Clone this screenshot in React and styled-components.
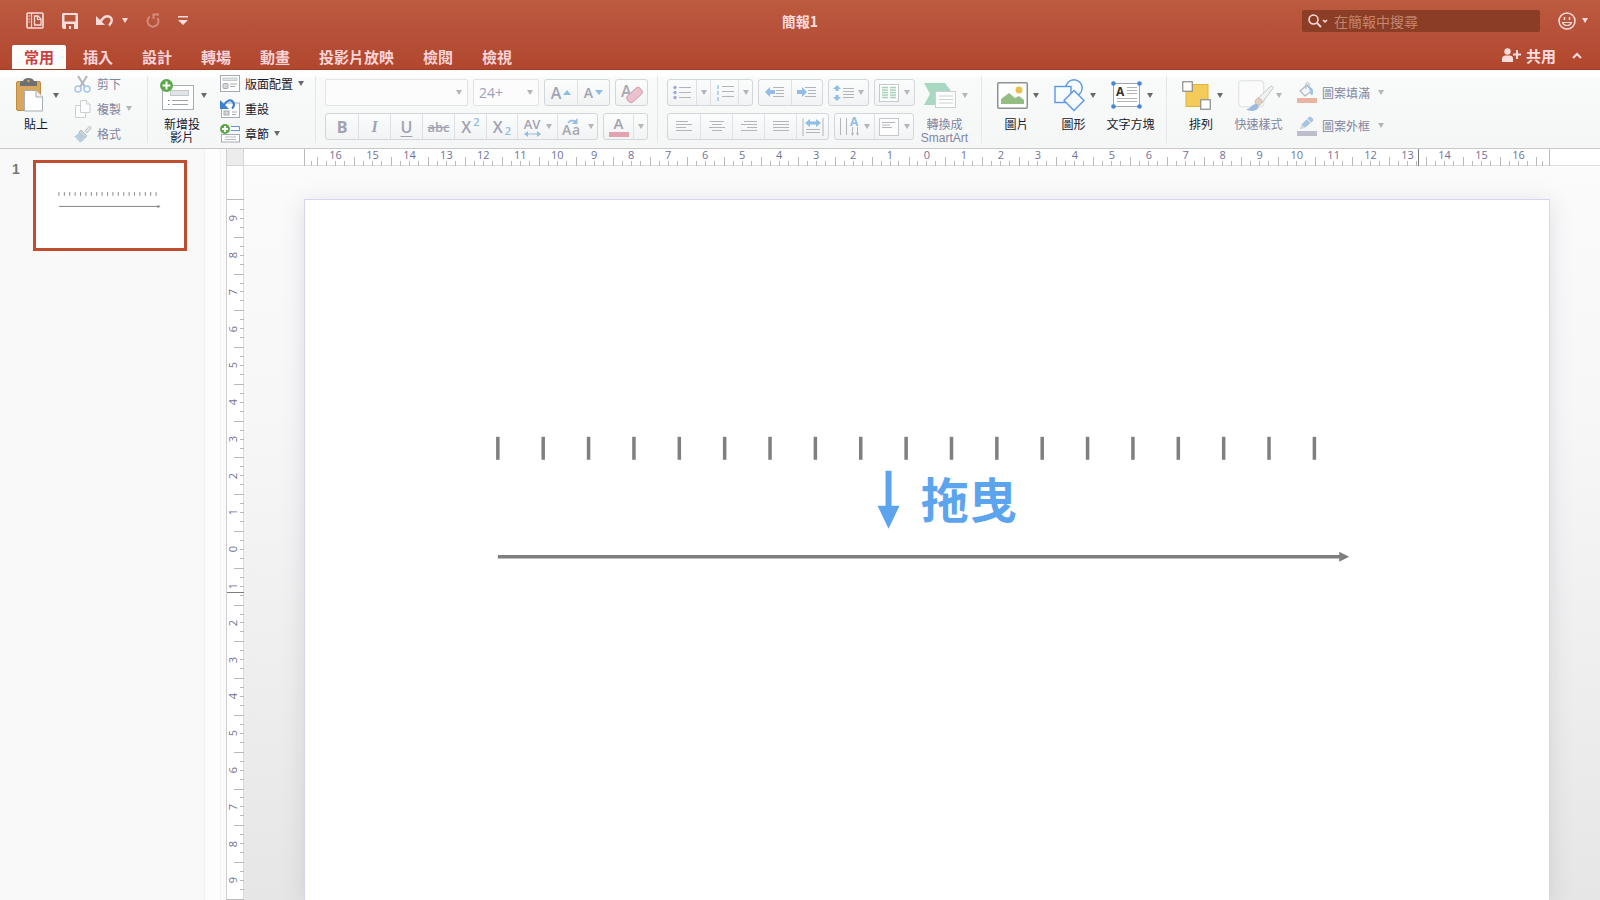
import React from "react";
import styled, { createGlobalStyle, css } from "styled-components";

const cjk = `"Noto Sans CJK TC", sans-serif`;

const GlobalStyle = createGlobalStyle`
  *, *::before, *::after { box-sizing: border-box; }
  body { margin: 0; background: #fafafa; font-family: ${cjk}; }
  button, input, select { font: inherit; color: inherit; }
  button { margin: 0; padding: 0; border: 0; background: none; }
  svg { display: block; flex: none; overflow: visible; }
`;

/* ---------- window frame ---------- */

const Window = styled.div`
  display: flex;
  flex-direction: column;
  min-height: 100vh;
`;

const Header = styled.header`
  display: flex;
  flex-direction: column;
  height: 70px;
  color: #fbdcdc;
  background: linear-gradient(#bc5b3e, #b7513a 45%, #b1472d);
  border-bottom: 1px solid #96402b;
`;

const TitleBar = styled.div`
  display: grid;
  grid-template-columns: 1fr auto 1fr;
  align-items: center;
  height: 43px;
  padding: 0 12px;
`;

const QuickAccess = styled.div`
  display: flex;
  align-items: center;
  gap: 18px;
  padding-left: 14px;
`;

const BarButton = styled.button`
  display: flex;
  align-items: center;
  gap: ${(p) => p.$gap || 6}px;
  opacity: ${(p) => (p.disabled ? 0.4 : 1)};
  color: #fbdcdc;
`;

const DocTitle = styled.h1`
  margin: 0;
  font-size: 14px;
  line-height: 20px;
  font-weight: 600;
`;

const TitleRight = styled.div`
  display: flex;
  justify-content: flex-end;
  align-items: center;
  gap: 18px;
`;

const SearchBox = styled.label`
  display: flex;
  align-items: center;
  gap: 6px;
  width: 238px;
  height: 22px;
  padding: 0 6px;
  border-radius: 2px;
  background: #8b3d25;
`;

const SearchInput = styled.input`
  flex: 1;
  min-width: 0;
  height: 20px;
  padding: 0;
  border: 0;
  outline: 0;
  background: none;
  font-size: 14px;
  &::placeholder { color: #c4846d; opacity: 1; }
`;

const TabBar = styled.div`
  display: flex;
  align-items: flex-end;
  flex: 1;
  padding: 0 18px 0 12px;
`;

const Tabs = styled.nav`
  display: flex;
  gap: 5px;
  flex: 1;
`;

const Tab = styled.button`
  height: 24px;
  padding: 0 12px;
  font-size: 15px;
  line-height: 22px;
  font-weight: 600;
  white-space: nowrap;
  color: #fad4d8;
  ${(p) => p.$active && css`
    color: #cb3f3d;
    background: #fdfdfd;
    border-radius: 2px 2px 0 0;
  `}
`;

const ShareArea = styled.div`
  display: flex;
  align-items: center;
  gap: 16px;
  height: 28px;
`;

const ShareButton = styled(BarButton)`
  gap: 5px;
  font-size: 15px;
  font-weight: 600;
`;

/* ---------- ribbon ---------- */

const Ribbon = styled.div`
  display: flex;
  height: 79px;
  background: linear-gradient(#fefefe 6px, #f9fafa 8px, #f5f6f6);
  border-bottom: 1px solid #c9c9c9;
`;

const Group = styled.section`
  position: relative;
  display: flex;
  gap: ${(p) => p.$gap || 14}px;
  flex: none;
  width: ${(p) => (p.$width ? `${p.$width}px` : "auto")};
  padding-left: ${(p) => p.$pad}px;
  ${(p) => p.$width && css`
    &::after {
      content: "";
      position: absolute;
      right: 0;
      top: 6px;
      bottom: 5px;
      width: 1px;
      background: #e6e7e8;
    }
  `}
`;

const Big = styled.button`
  display: flex;
  flex-direction: column;
  align-items: center;
  flex: none;
  gap: 5px;
  width: ${(p) => p.$width}px;
  padding-top: 6px;
  color: ${(p) => (p.disabled ? "#8186a0" : "#14162e")};
`;

const BigIcon = styled.span`
  display: flex;
  align-items: center;
  justify-content: space-between;
  width: 100%;
  height: 38px;
`;

const BigLabel = styled.span`
  padding-right: 3px;
  font-size: 12px;
  line-height: 13px;
  white-space: pre;
  font-family: "Liberation Sans", ${cjk};
`;

const SmallList = styled.div`
  display: flex;
  flex-direction: column;
  padding-top: ${(p) => (p.$tall ? 6 : 1)}px;
`;

const Small = styled.button`
  display: flex;
  align-items: center;
  gap: 5px;
  height: ${(p) => (p.$tall ? 33 : 25)}px;
  font-size: 12px;
  line-height: 16px;
  white-space: nowrap;
  color: ${(p) => (p.disabled ? "#8186a0" : "#14162e")};
  & > span { margin-right: ${(p) => (p.$tall ? 3 : 0)}px; }
`;

const Rows = styled.div`
  display: flex;
  flex-direction: column;
  gap: 7px;
  padding-top: 9px;
`;

const Row = styled.div`
  display: flex;
  gap: 5px;
  height: 27px;
`;

const Combo = styled.div`
  display: flex;
  align-items: center;
  width: ${(p) => p.$width}px;
  padding: 0 5px;
  border: 1px solid #e2e3e5;
  border-radius: 2px;
  background: #fcfcfc;
`;

const Select = styled.select`
  appearance: none;
  flex: 1;
  min-width: 0;
  height: 22px;
  padding: 0;
  border: 0;
  background: none;
  opacity: 1;
  font-family: "Open Sans", sans-serif;
  font-size: 14px;
  color: #9ea1bd;
`;

const Segments = styled.div`
  display: flex;
  border: 1px solid #d3d6da;
  border-radius: 3px;
  background: linear-gradient(#fbfcfc, #f2f3f4);
`;

const Seg = styled.button`
  display: flex;
  align-items: center;
  justify-content: center;
  gap: ${(p) => p.$gap || 2}px;
  width: ${(p) => p.$width}px;
  font-family: "Open Sans", sans-serif;
  font-size: 16px;
  line-height: 20px;
  color: #a0a3b2;
  & + & { border-left: 1px solid #dfe1e4; }
`;

const Glyph = styled.span`
  font-weight: ${(p) => (p.$bold ? 700 : 600)};
  font-style: ${(p) => (p.$italic ? "italic" : "normal")};
  font-family: ${(p) => (p.$italic ? `"Liberation Serif", serif` : "inherit")};
  font-size: ${(p) => p.$size || 16}px;
  text-decoration: ${(p) => p.$line || "none"};
  text-decoration-thickness: 1px;
  text-underline-offset: 3px;
`;

const Script = styled.span`
  align-self: ${(p) => (p.$low ? "flex-end" : "flex-start")};
  font-size: 11px;
  line-height: 16px;
  font-weight: 600;
  color: #92bde6;
`;

const Stack = styled.span`
  display: flex;
  flex-direction: column;
  align-items: center;
  gap: ${(p) => p.$gap || 0}px;
  font-size: ${(p) => p.$size || 13}px;
  line-height: 14px;
  font-weight: 600;
`;

const ColorBar = styled.span`
  width: 20px;
  height: 5px;
  background: #e2a3ae;
`;

/* ---------- work area ---------- */

const Main = styled.main`
  display: flex;
  flex: 1;
`;

const Slides = styled.aside`
  display: flex;
  align-items: flex-start;
  gap: 13px;
  flex: none;
  width: 205px;
  padding: 11px 0 0 12px;
  background: #f9f9f9;
  border-right: 1px solid #f0f0f1;
`;

const SlideNumber = styled.span`
  width: 8px;
  font-family: "Liberation Sans", sans-serif;
  font-size: 14px;
  line-height: 18px;
  font-weight: 700;
  color: #777;
`;

const Thumb = styled.button`
  width: 154px;
  padding: 1px 0;
  border: 3px solid #c14d31;
  background: #fff;
`;

const Divider = styled.div`
  flex: none;
  width: 22px;
  background: linear-gradient(90deg, #fdfdfd 15px, #f2f2f3 15px, #f2f2f3 16px, #fbfbfb 16px);
  border-right: 1px solid #cfcfcf;
`;

const Workspace = styled.div`
  display: grid;
  flex: 1;
  grid-template-columns: 17px 60px minmax(0, 1fr) 50px;
  grid-template-rows: 17px 33px auto 1fr;
  background: linear-gradient(#fbfbfb, #f7f7f8 35%, #eeeeee 70%, #e6e6e6);
`;

const Corner = styled.div`
  background: #ececec;
  border-right: 1px solid #d5d5d8;
  border-bottom: 1px solid #d5d5d8;
`;

const RulerTrack = styled.div`
  background: #fff;
  grid-row: ${(p) => (p.$vertical ? "2 / 5" : "1")};
  grid-column: ${(p) => (p.$vertical ? "1" : "2 / 5")};
  border: 0 solid #dcdcde;
  ${(p) => (p.$vertical ? "border-right-width: 1px;" : "border-bottom-width: 1px;")}
`;

const HRuler = styled.div`
  grid-row: 1;
  grid-column: 3;
  position: relative;
  display: flex;
  border-left: 1px solid #bbb;
  border-right: 1px solid #bbb;
  font: 11px/12px "Open Sans", sans-serif;
  color: #6f7199;
`;

const VRuler = styled(HRuler)`
  grid-row: 3;
  grid-column: 1;
  flex-direction: column;
  border: 0;
  border-top: 1px solid #bbb;
  border-bottom: 1px solid #bbb;
`;

const HCell = styled.div`
  display: flex;
  flex-direction: column;
  justify-content: space-between;
  align-items: center;
  flex: 1 1 0;
  min-width: 0;
  height: 17px;
`;

const HTicks = styled.div`
  display: flex;
  justify-content: space-between;
  align-items: flex-end;
  align-self: stretch;
  height: 9px;
  margin-top: -6px;
`;

const HTick = styled.i`
  width: 1px;
  height: ${(p) => (p.$long ? 9 : 5)}px;
  background: ${(p) => (p.$blank ? "transparent" : "#b9b9b9")};
`;

const HEnd = styled.div`
  flex: 0 1 12px;
  display: flex;
  align-items: flex-end;
  justify-content: center;
`;

const VCell = styled.div`
  display: flex;
  align-items: center;
  justify-content: space-between;
  flex: 1 1 0;
  min-height: 0;
`;

const VLabel = styled.span`
  writing-mode: vertical-rl;
  transform: rotate(180deg);
  line-height: 12px;
`;

const VTicks = styled.div`
  display: flex;
  flex-direction: column;
  justify-content: space-between;
  align-items: flex-end;
  align-self: stretch;
  width: 10px;
  margin-left: -6px;
`;

const VTick = styled.i`
  height: 1px;
  width: ${(p) => (p.$long ? 10 : 4)}px;
  background: ${(p) => (p.$blank ? "transparent" : "#b9b9b9")};
`;

const PointerMark = styled.i`
  position: absolute;
  background: #7d7d7d;
  ${(p) => (p.$vertical
    ? "top: 56.1%; left: 0; width: 17px; height: 1px;"
    : "left: 89.5%; top: 0; height: 17px; width: 1px;")}
`;

const Slide = styled.div`
  grid-row: 3;
  grid-column: 3;
  position: relative;
  aspect-ratio: 16 / 9;
  background: #fff;
  border: 1px solid #d6d6ec;
  border-bottom: 0;
  box-shadow: 0 4px 22px rgba(80, 80, 120, 0.16);
`;

const Caption = styled.p`
  position: absolute;
  left: 49.5%;
  top: 37.3%;
  margin: 0;
  font-size: 48px;
  line-height: 72px;
  font-weight: 700;
  color: #5ca5ee;
`;

/* ---------- drawings ---------- */

const Caret = ({ color = "#666a70", size = 6 }) => (
  <svg width={size} height="5" viewBox="0 0 6 5" aria-hidden="true">
    <path d="M0 0h6L3 5z" fill={color} />
  </svg>
);
const Dim = () => <Caret color="#b3b5ba" />;

const Timeline = ({ stroke, guide }) => (
  <svg width="100%" viewBox="0 0 1245 700" aria-hidden="true">
    {Array.from({ length: 19 }, (_, i) => (
      <path key={i} d={`M${193 + i * 45.4} 237v${guide ? 23 : 30}`} stroke="#7f7f7f" strokeWidth={stroke} />
    ))}
    <path d="M193 357h847" stroke="#7f7f7f" strokeWidth={stroke} />
    {guide
      ? <path d="M1035 352l10 5-10 5z" fill="#7f7f7f" />
      : <path d="M1022 342l26 15-26 15z" fill="#8f8f8f" />}
    {guide && <path d="M581 271h6v35h8l-11 23-11-23h8z" fill="#5ca5ee" />}
  </svg>
);

const PanelIcon = () => (
  <svg width="18" height="17" viewBox="0 0 18 17" fill="none" stroke="currentColor">
    <rect x="1" y="1" width="16" height="15" rx="1" strokeWidth="1.6" />
    <path d="M5.5 1v15" strokeWidth="1.2" />
    <path d="M2.500 4h1.500M2.500 7h1.500M2.500 10h1.500" strokeWidth="1" />
    <path d="M8.500 4h3.500l3 3v6H8.500z" strokeWidth="1.300" />
    <path d="M11.500 4v3.500H15" strokeWidth="1.200" />
  </svg>
);
const SaveIcon = () => (
  <svg width="16" height="16" viewBox="0 0 16 16">
    <path fillRule="evenodd" fill="currentColor" d="M1 0h14l1 1v15H1.500L0 14.500V1zM2.500 2v6.500h11V2zM4 11V16h3v-3h2v3h3v-5z" />
  </svg>
);
const UndoIcon = () => (
  <svg width="18" height="15" viewBox="0 0 18 15">
    <path d="M0 3v9h9z" fill="currentColor" />
    <path d="M4.500 8.500C7 4.500 10 2.500 13 3.500c3.500 1.300 3.800 5.500 0 9" fill="none" stroke="currentColor" strokeWidth="2.400" />
  </svg>
);
const RedoIcon = () => (
  <svg width="14" height="15" viewBox="0 0 14 15" fill="none" stroke="currentColor" strokeWidth="2">
    <path d="M4 3.500A5.500 5.500 0 1 0 11.500 5" />
    <path d="M7.500 6V1.500H13" />
  </svg>
);
const CustomizeIcon = () => (
  <svg width="10" height="9" viewBox="0 0 10 9" fill="currentColor">
    <path d="M0 0h10v1.500H0zM0 4h10L5 9z" />
  </svg>
);
const SearchIcon = () => (
  <svg width="20" height="14" viewBox="0 0 20 14" fill="none" stroke="#fbdcdc">
    <circle cx="5.500" cy="5.500" r="4.500" strokeWidth="1.500" />
    <path d="M9 9l4 4" strokeWidth="1.800" />
    <path d="M15 6l2 2 2-2" strokeWidth="1.500" />
  </svg>
);
const SmileIcon = () => (
  <svg width="18" height="18" viewBox="0 0 18 18" fill="none" stroke="currentColor">
    <circle cx="9" cy="9" r="8" strokeWidth="1.500" />
    <path d="M6.500 5v3M11.500 5v3" strokeWidth="1.500" />
    <path d="M4.500 10.500c1.500 4 7.500 4 9 0z" strokeWidth="1.200" />
  </svg>
);
const ShareIcon = () => (
  <svg width="19" height="14" viewBox="0 0 19 14" fill="currentColor">
    <circle cx="5.500" cy="3.500" r="3.200" />
    <path d="M0 14v-3.500C0 8.500 2 7.500 3.500 7.500h4C9.500 7.500 11 8.500 11 10.500V14z" />
    <path d="M14 2h2v3.500h3v2h-3V11h-2V7.500h-3v-2h3z" />
  </svg>
);
const CollapseIcon = () => (
  <svg width="10" height="7" viewBox="0 0 10 7" fill="none" stroke="currentColor" strokeWidth="2">
    <path d="M1 6l4-4 4 4" />
  </svg>
);

const PasteIcon = () => (
  <svg width="27" height="34" viewBox="0 0 27 34">
    <rect x="0.500" y="3.500" width="24" height="29" rx="1.500" fill="#d8a75c" stroke="#c08b3d" />
    <path d="M4 8V4.500c0-1 1-1.500 3-1.500 1-4 10-4 11 0 2 0 3 .5 3 1.500V8z" fill="#6b7072" />
    <circle cx="12.500" cy="3" r="1.300" fill="#d8a75c" />
    <path d="M8.500 12.500H20l6.500 6.500v14h-18z" fill="#fff" stroke="#a9adb4" />
    <path d="M20 12.500V19h6.500" fill="#eef0f2" stroke="#a9adb4" />
  </svg>
);
const CutIcon = () => (
  <svg width="18" height="18" viewBox="0 0 18 18" fill="none">
    <path d="M4 1l7 11M13 1L6 12" stroke="#b2b5bb" strokeWidth="2" />
    <circle cx="4" cy="14" r="3" stroke="#a5c6ea" strokeWidth="1.500" />
    <circle cx="13" cy="14" r="3" stroke="#a5c6ea" strokeWidth="1.500" />
  </svg>
);
const CopyIcon = () => (
  <svg width="18" height="18" viewBox="0 0 18 18" fill="#fcfcfc" stroke="#cccfd3">
    <path d="M1.500 5.500h7l3 3v9h-10z" />
    <path d="M6.500.5h6l3.500 3.500v8.500H6.500z" />
    <path d="M12.500.5V4H16" />
  </svg>
);
const FormatIcon = () => (
  <svg width="18" height="18" viewBox="0 0 18 18">
    <path d="M11 6l4.500-5 2 2L13 8z" fill="#e1e3e6" stroke="#bfc3c8" />
    <path d="M7 5l6 6-2 2-6-6z" fill="#d2d5d9" stroke="#b5b9be" />
    <path d="M5 7l6 6c-1 2-3 4-5 4.500L0 11c2 0 4-2 5-4z" fill="#b8cde0" />
  </svg>
);
const Plus = ({ r = 6.5 }) => (
  <g>
    <circle cx={r} cy={r} r={r} fill="#5aa84a" />
    <path d={`M${r} ${r * 0.4}V${r * 1.6}M${r * 0.4} ${r}H${r * 1.6}`} stroke="#fff" strokeWidth="2" />
  </g>
);
const NewSlideIcon = () => (
  <svg width="34" height="32" viewBox="0 0 34 32">
    <rect x="2.500" y="6.500" width="31" height="24" fill="#fff" stroke="#a9adb3" />
    <rect x="10.500" y="11.500" width="18" height="5" fill="#e1e4e6" stroke="#c3c6ca" />
    <path d="M12 21.500h16M12 25.500h16" stroke="#9da1a8" />
    <path d="M8 21.500h1.500M8 25.500h1.500" stroke="#888" />
    <Plus />
  </svg>
);
const LayoutIcon = () => (
  <svg width="20" height="17" viewBox="0 0 20 17" fill="none" stroke="#a6aab0">
    <rect x=".5" y=".5" width="19" height="16" fill="#fff" />
    <rect x="3" y="3" width="14" height="2.500" fill="#dfe2e5" stroke="#c6c9cd" />
    <rect x="3" y="8.500" width="5" height="5" rx="1" fill="#d3d6da" />
    <path d="M10 9h7M10 11.500h5" />
  </svg>
);
const ResetIcon = () => (
  <svg width="20" height="19" viewBox="0 0 20 19" fill="none" stroke="#a6aab0">
    <rect x="1.500" y="4" width="18" height="14.500" fill="#fff" />
    <rect x="4" y="12" width="5" height="4" fill="#d3d6da" />
    <path d="M12 13h5M12 15.500h4" />
    <path d="M0 1v9h9z" fill="#3f81cf" stroke="none" />
    <path d="M4 6c3-5 7-6 9-3 1.500 2 1 4.500-1 6.500" stroke="#3f81cf" strokeWidth="2.200" />
  </svg>
);
const SectionIcon = () => (
  <svg width="20" height="19" viewBox="0 0 20 19" fill="none">
    <path d="M11 2.500h8.500v4H11" fill="#fff" stroke="#5d93d9" />
    <rect x="1.500" y="10.500" width="18" height="7.500" fill="#fff" stroke="#a6aab0" />
    <path d="M5 13h11M5 15.500h11" stroke="#b4b8bd" />
    <Plus r={5} />
  </svg>
);
const Eraser = () => (
  <svg width="22" height="22" viewBox="0 0 22 22">
    <text x="0" y="15" fontFamily="Open Sans, sans-serif" fontWeight="600" fontSize="16" fill="#a6a9b0">A</text>
    <rect x="5" y="9" width="17" height="8" rx="3" transform="rotate(-42 13.500 13)" fill="#eac2cd" stroke="#d6a6b3" />
  </svg>
);
const Tri = ({ up }) => (
  <svg width="8" height="5" viewBox="0 0 8 5"><path d={up ? "M0 5h8L4 0z" : "M0 0h8L4 5z"} fill="#8dbbe6" /></svg>
);
const SpanArrow = ({ width = 17 }) => (
  <svg width={width} height="6" viewBox="0 0 17 6" fill="#92bde6">
    <path d="M0 3l4-3v2.400h9V0l4 3-4 3V3.600H4V6z" />
  </svg>
);
const CaseIcon = () => (
  <svg width="20" height="20" viewBox="0 0 20 20">
    <text x="0" y="18" fontFamily="Open Sans, sans-serif" fontWeight="600" fontSize="14" fill="#a6a9b0">A</text>
    <text x="10" y="18" fontFamily="Open Sans, sans-serif" fontWeight="600" fontSize="14" fill="#a6a9b0">a</text>
    <path d="M6 6c2-3 6-3 8-1" fill="none" stroke="#92bde6" strokeWidth="1.600" />
    <path d="M15.500 1v6H10z" fill="#92bde6" />
  </svg>
);
const Lines = ({ rows, x = 0 }) => rows.map(([a, b], i) => (
  <path key={i} d={`M${x + a} ${1.5 + i * (rows.length > 3 ? 3 : 5)}H${x + b}`} stroke="#b2b6bb" />
));
const BulletIcon = () => (
  <svg width="18" height="14" viewBox="0 0 18 14">
    {[1.5, 6.5, 11.5].map((y) => <circle key={y} cx="2" cy={y} r="1.700" fill="#a0a9df" />)}
    <Lines rows={[[6, 18], [6, 18], [6, 18]]} />
  </svg>
);
const NumberIcon = () => (
  <svg width="18" height="16" viewBox="0 0 18 16">
    <path d="M2 0v4M2 6v4M2 12v4" stroke="#a7cbe9" strokeWidth="1.600" />
    <Lines rows={[[6, 18], [6, 18], [6, 18]]} />
  </svg>
);
const IndentIcon = ({ out }) => (
  <svg width="20" height="14" viewBox="0 0 20 14">
    <Lines rows={[[8, 19], [11, 19], [11, 19], [8, 19]]} />
    <path d={out ? "M0 6l5-5v3h5v4H5v3z" : "M10 6L5 1v3H0v4h5v3z"} fill="#92bde6" />
  </svg>
);
const SpacingIcon = () => (
  <svg width="21" height="16" viewBox="0 0 21 16">
    <path d="M4 0l4 4H5.500v2h-3V4H0zM4 16l4-4H5.500v-2h-3v2H0z" fill="#92bde6" />
    <g transform="translate(0 2)"><Lines rows={[[10, 21], [10, 21], [10, 21], [10, 21]]} /></g>
  </svg>
);
const ColumnsIcon = () => (
  <svg width="20" height="18" viewBox="0 0 20 18">
    <rect x=".5" y=".5" width="19" height="17" fill="#fdfdfd" stroke="#c6c9cc" />
    {[3.5, 6, 8.5, 11, 13.5].map((y) => <path key={y} d={`M3 ${y}h6M11 ${y}h6`} stroke="#a8d1bb" strokeWidth="1.300" />)}
  </svg>
);
const alignRows = {
  left: [[0, 12], [0, 16], [0, 10], [0, 16]],
  center: [[1, 15], [3, 13], [0, 16], [3, 13]],
  right: [[3, 16], [0, 16], [6, 16], [0, 16]],
  justify: [[0, 16], [0, 16], [0, 16], [0, 16]],
};
const AlignIcon = ({ kind }) => (
  <svg width="16" height="13" viewBox="0 0 16 13"><Lines rows={alignRows[kind]} /></svg>
);
const DistributeIcon = () => (
  <svg width="22" height="18" viewBox="0 0 22 18">
    <path d="M1 0v18M21 0v18M4 11.500h14M4 14.500h14" stroke="#b2b6bb" />
    <path d="M3 5l5-4v2.500h6V1l5 4-5 4V6.500H8V9z" fill="#92bde6" />
  </svg>
);
const DirectionIcon = () => (
  <svg width="21" height="19" viewBox="0 0 21 19">
    <path d="M1.500 1v17M7.500 1v17M13.500 10v8M18.500 10v8" stroke="#b2b6bb" />
    <path d="M12 16l1.500 3 1.500-3zM17 16l1.500 3 1.500-3z" fill="#b2b6bb" />
    <text x="11" y="9" fontFamily="Open Sans, sans-serif" fontWeight="700" fontSize="12" fill="#92bde6">A</text>
  </svg>
);
const AlignTextIcon = () => (
  <svg width="20" height="18" viewBox="0 0 20 18">
    <rect x=".5" y=".5" width="19" height="17" fill="#fdfdfd" stroke="#c6c9cc" />
    <path d="M3 4.500h13M3 7h8M3 9.500h10" stroke="#b2b6bb" />
  </svg>
);
const SmartArtIcon = () => (
  <svg width="32" height="25" viewBox="0 0 32 25">
    <path d="M0 0h21l6 8-6 14H0l6-11z" fill="#a9d8c2" />
    <rect x="11.500" y="8.500" width="20" height="16" fill="#fdfdfd" stroke="#cdd0d3" />
    <path d="M15 13h14M15 16.500h14M15 20h14" stroke="#cdd0d3" />
  </svg>
);
const PictureIcon = () => (
  <svg width="31" height="27" viewBox="0 0 31 27">
    <rect x=".75" y=".75" width="29.500" height="25.500" rx="1" fill="#fff" stroke="#8d9196" strokeWidth="1.500" />
    <circle cx="22" cy="8" r="3.500" fill="#e9c04e" />
    <path d="M4 22v-5l8-6 6 5 4-2 5 4v4z" fill="#93bd83" />
  </svg>
);
const ShapesIcon = () => (
  <svg width="31" height="32" viewBox="0 0 31 32" fill="#f8fbff" stroke="#5b98e4" strokeWidth="1.400">
    <circle cx="20" cy="9" r="8.200" />
    <rect x="1" y="7.500" width="16" height="16" />
    <path d="M20 11.500L30 21.500 20 31.500 10 21.500z" />
  </svg>
);
const TextBoxIcon = () => (
  <svg width="31" height="28" viewBox="0 0 31 28">
    <rect x="2.500" y="2.500" width="26" height="23" fill="#fff" stroke="#9fa6b2" />
    <text x="5" y="15" fontFamily="Open Sans, sans-serif" fontWeight="700" fontSize="12" fill="#333">A</text>
    <path d="M16 6.500h10M16 9.500h10M16 12.500h10M6 17.500h20M6 20.500h20" stroke="#aeb2b7" />
    {[[2.5, 2.5], [28.5, 2.5], [2.5, 25.5], [28.5, 25.5]].map(([x, y]) => (
      <circle key={`${x}-${y}`} cx={x} cy={y} r="2.300" fill="#4a86d6" />
    ))}
  </svg>
);
const ArrangeIcon = () => (
  <svg width="29" height="29" viewBox="0 0 29 29">
    <rect x="4" y="3.500" width="22" height="22" fill="#f4cb58" stroke="#e0b23e" />
    <rect x=".75" y=".75" width="9.500" height="9.500" fill="#fff" stroke="#888b90" strokeWidth="1.200" />
    <rect x="18.750" y="18.750" width="9.500" height="9.500" fill="#fff" stroke="#888b90" strokeWidth="1.200" />
  </svg>
);
const QuickStyleIcon = () => (
  <svg width="36" height="31" viewBox="0 0 36 31">
    <rect x=".75" y=".75" width="25" height="26" rx="3" fill="#fbfbfb" stroke="#dcdee0" />
    <path d="M19 19L33 6l2.500 1.500L24 23z" fill="#f1f1f1" stroke="#c4c7ca" />
    <path d="M17 21c2-4 6-3 7 0 0 4-3 5-6 4z" fill="#e0d0bd" stroke="#cdbba5" />
    <path d="M8 29c5 0 6-6 11-5 4 3 0 7-5 7-3 0-5-1-6-2z" fill="#9dbcdb" />
  </svg>
);
const FillIcon = () => (
  <svg width="20" height="21" viewBox="0 0 20 21">
    <path d="M3 9l7-6 5 6-7 5z" fill="#f1f5f8" stroke="#b1bac4" strokeWidth="1.300" />
    <path d="M9 7V2c0-2 3-2 3 0v3" fill="none" stroke="#b5b9be" />
    <path d="M12 5c4 1 4 4 3 8-2-1-1-4-3-8z" fill="#9cc3e6" stroke="#9cc3e6" />
    <path d="M0 16h20v5H0z" fill="#eab5a0" />
  </svg>
);
const OutlineIcon = () => (
  <svg width="20" height="20" viewBox="0 0 20 20">
    <path d="M3 13l2-5 7-7c2-1 5 2 4 4l-7 6z" fill="#a8c4de" />
    <path d="M3 13l1.500-4.500L8 12z" fill="#d8dde2" />
    <path d="M10 3l4 4" stroke="#f5f6f6" />
    <path d="M0 15h20v5H0z" fill="#bcbfcb" />
  </svg>
);

/* ---------- pieces ---------- */

const BigButton = ({ icon, label, width, disabled }) => (
  <Big $width={width} disabled={disabled}>
    <BigIcon>{icon}{disabled ? <Dim /> : <Caret />}</BigIcon>
    <BigLabel>{label}</BigLabel>
  </Big>
);

const SmallButton = ({ icon, label, caret, disabled, tall }) => (
  <Small disabled={disabled} $tall={tall}>
    {icon}<span>{label}</span>{caret && (disabled ? <Dim /> : <Caret />)}
  </Small>
);

const Horizontal = () => (
  <HRuler>
    <HEnd><HTick /></HEnd>
    {Array.from({ length: 33 }, (_, i) => (
      <HCell key={i}>
        <span>{Math.abs(i - 16)}</span>
        <HTicks><HTick $long /><HTick /><HTick /><HTick /><HTick $blank={i < 32} $long /></HTicks>
      </HCell>
    ))}
    <HEnd><HTick /></HEnd>
    <PointerMark />
  </HRuler>
);

const Vertical = () => (
  <VRuler>
    {Array.from({ length: 19 }, (_, i) => (
      <VCell key={i}>
        <VLabel>{Math.abs(i - 9)}</VLabel>
        <VTicks><VTick $long $blank={i === 0} /><VTick /><VTick /><VTick /><VTick $blank /></VTicks>
      </VCell>
    ))}
    <PointerMark $vertical />
  </VRuler>
);

const tabs = ["常用", "插入", "設計", "轉場", "動畫", "投影片放映", "檢閱", "檢視"];

export default function App() {
  return (
    <Window>
      <GlobalStyle />
      <Header>
        <TitleBar>
          <QuickAccess>
            <BarButton aria-label="檢視窗格"><PanelIcon /></BarButton>
            <BarButton aria-label="儲存"><SaveIcon /></BarButton>
            <BarButton aria-label="復原" $gap={8}><UndoIcon /><Caret color="#fbdcdc" /></BarButton>
            <BarButton aria-label="重做" disabled><RedoIcon /></BarButton>
            <BarButton aria-label="自訂工具列"><CustomizeIcon /></BarButton>
          </QuickAccess>
          <DocTitle>簡報1</DocTitle>
          <TitleRight>
            <SearchBox>
              <SearchIcon />
              <SearchInput type="search" aria-label="在簡報中搜尋" placeholder="在簡報中搜尋" />
            </SearchBox>
            <BarButton aria-label="意見反應"><SmileIcon /><Caret color="#fbdcdc" /></BarButton>
          </TitleRight>
        </TitleBar>
        <TabBar>
          <Tabs>
            {tabs.map((t, i) => <Tab key={t} $active={i === 0}>{t}</Tab>)}
          </Tabs>
          <ShareArea>
            <ShareButton><ShareIcon />共用</ShareButton>
            <BarButton aria-label="收合功能區"><CollapseIcon /></BarButton>
          </ShareArea>
        </TabBar>
      </Header>

      <Ribbon>
        <Group $width={148} $pad={16} $gap={15}>
          <BigButton width={43} icon={<PasteIcon />} label="貼上" />
          <SmallList>
            <SmallButton disabled icon={<CutIcon />} label="剪下" />
            <SmallButton disabled icon={<CopyIcon />} label="複製" caret />
            <SmallButton disabled icon={<FormatIcon />} label="格式" />
          </SmallList>
        </Group>

        <Group $width={168} $pad={12} $gap={13}>
          <BigButton width={47} icon={<NewSlideIcon />} label={"新增投\n影片"} />
          <SmallList>
            <SmallButton icon={<LayoutIcon />} label="版面配置" caret />
            <SmallButton icon={<ResetIcon />} label="重設" />
            <SmallButton icon={<SectionIcon />} label="章節" caret />
          </SmallList>
        </Group>

        <Group $width={342} $pad={9}>
          <Rows>
            <Row>
              <Combo $width={143}>
                <Select aria-label="字型" disabled><option> </option></Select><Dim />
              </Combo>
              <Combo $width={66}>
                <Select aria-label="字型大小" disabled><option>24+</option></Select><Dim />
              </Combo>
              <Segments>
                <Seg $width={32} disabled><Glyph>A</Glyph><Tri up /></Seg>
                <Seg $width={32} disabled><Glyph $size={14}>A</Glyph><Tri /></Seg>
              </Segments>
              <Segments><Seg $width={31} disabled aria-label="清除格式"><Eraser /></Seg></Segments>
            </Row>
            <Row>
              <Segments>
                <Seg $width={32} disabled><Glyph $bold>B</Glyph></Seg>
                <Seg $width={32} disabled><Glyph $italic>I</Glyph></Seg>
                <Seg $width={32} disabled><Glyph $line="underline">U</Glyph></Seg>
                <Seg $width={32} disabled><Glyph $size={13} $line="line-through">abc</Glyph></Seg>
                <Seg $width={32} disabled><Glyph>X</Glyph><Script>2</Script></Seg>
                <Seg $width={31} disabled><Glyph>X</Glyph><Script $low>2</Script></Seg>
                <Seg $width={40} $gap={5} disabled><Stack>AV<SpanArrow /></Stack><Dim /></Seg>
                <Seg $width={40} $gap={6} disabled aria-label="變更大小寫"><CaseIcon /><Dim /></Seg>
              </Segments>
              <Segments>
                <Seg $width={29} disabled><Stack $size={15} $gap={2}>A<ColorBar /></Stack></Seg>
                <Seg $width={14} disabled aria-label="字型色彩"><Dim /></Seg>
              </Segments>
            </Row>
          </Rows>
        </Group>

        <Group $width={324} $pad={9} $gap={9}>
          <Rows>
            <Row>
              <Segments>
                <Seg $width={28} disabled aria-label="項目符號"><BulletIcon /></Seg>
                <Seg $width={14} disabled aria-label="項目符號選項"><Dim /></Seg>
                <Seg $width={28} disabled aria-label="編號"><NumberIcon /></Seg>
                <Seg $width={14} disabled aria-label="編號選項"><Dim /></Seg>
              </Segments>
              <Segments>
                <Seg $width={32} disabled aria-label="減少縮排"><IndentIcon out /></Seg>
                <Seg $width={31} disabled aria-label="增加縮排"><IndentIcon /></Seg>
              </Segments>
              <Segments><Seg $width={39} $gap={4} disabled aria-label="行距"><SpacingIcon /><Dim /></Seg></Segments>
              <Segments><Seg $width={39} $gap={5} disabled aria-label="欄"><ColumnsIcon /><Dim /></Seg></Segments>
            </Row>
            <Row>
              <Segments>
                <Seg $width={32} disabled aria-label="靠左"><AlignIcon kind="left" /></Seg>
                <Seg $width={32} disabled aria-label="置中"><AlignIcon kind="center" /></Seg>
                <Seg $width={32} disabled aria-label="靠右"><AlignIcon kind="right" /></Seg>
                <Seg $width={32} disabled aria-label="左右對齊"><AlignIcon kind="justify" /></Seg>
                <Seg $width={32} disabled aria-label="分散對齊"><DistributeIcon /></Seg>
              </Segments>
              <Segments>
                <Seg $width={39} $gap={4} disabled aria-label="文字方向"><DirectionIcon /><Dim /></Seg>
                <Seg $width={39} $gap={5} disabled aria-label="對齊文字"><AlignTextIcon /><Dim /></Seg>
              </Segments>
            </Row>
          </Rows>
          <BigButton width={44} disabled icon={<SmartArtIcon />} label={"轉換成\nSmartArt"} />
        </Group>

        <Group $width={185} $pad={15} $gap={15}>
          <BigButton width={42} icon={<PictureIcon />} label="圖片" />
          <BigButton width={42} icon={<ShapesIcon />} label="圖形" />
          <BigButton width={42} icon={<TextBoxIcon />} label="文字方塊" />
        </Group>

        <Group $pad={15} $gap={15}>
          <BigButton width={41} icon={<ArrangeIcon />} label="排列" />
          <BigButton width={44} disabled icon={<QuickStyleIcon />} label="快速樣式" />
          <SmallList $tall>
            <SmallButton tall disabled icon={<FillIcon />} label="圖案填滿" caret />
            <SmallButton tall disabled icon={<OutlineIcon />} label="圖案外框" caret />
          </SmallList>
        </Group>
      </Ribbon>

      <Main>
        <Slides>
          <SlideNumber>1</SlideNumber>
          <Thumb aria-label="投影片 1"><Timeline stroke={8} /></Thumb>
        </Slides>
        <Divider />
        <Workspace>
          <Corner />
          <RulerTrack />
          <RulerTrack $vertical />
          <Horizontal />
          <Vertical />
          <Slide>
            <Timeline stroke={3.5} guide />
            <Caption>拖曳</Caption>
          </Slide>
        </Workspace>
      </Main>
    </Window>
  );
}
